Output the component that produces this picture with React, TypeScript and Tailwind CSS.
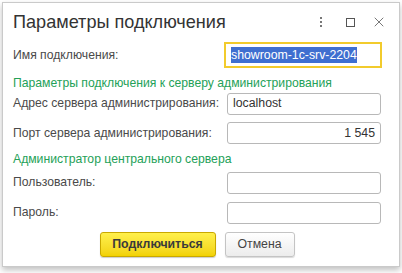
import { X } from "lucide-react";

function Field({ value, right }: { value?: string; right?: boolean }) {
  return (
    <div
      className={`ml-[3px] flex h-[22px] w-[154px] items-center rounded-[3px] border border-[#b8b8b8] bg-white px-[5px] text-[12.3px] text-[#333] ${
        right ? "justify-end" : ""
      }`}
    >
      {value}
    </div>
  );
}

function Row({ label, height, children }: { label: string; height: string; children: React.ReactNode }) {
  return (
    <div className={`flex items-center ${height}`}>
      <div className="w-[211px] whitespace-nowrap text-[12.2px] text-[#4a4a4a]">{label}</div>
      {children}
    </div>
  );
}

export default function App() {
  return (
    <div
      className="h-[273px] w-[402px] bg-white pl-[2px] pt-[2px]"
      style={{ fontFamily: '"Liberation Sans", Arial, sans-serif' }}
    >
      <div className="flex h-[265px] w-[398px] flex-col border border-[#cacaca] bg-white pl-[10px] shadow-[0_3px_6px_rgba(0,0,0,0.25)]">
        {/* Title bar */}
        <div className="flex h-[38px] items-center">
          <div className="pt-[2px] text-[18.1px] text-[#333]">Параметры подключения</div>
          <div className="ml-auto flex items-center pr-[12px] text-[#555]">
            <div className="flex flex-col gap-[2px]">
              <span className="h-[2px] w-[2px] bg-[#777]" />
              <span className="h-[2px] w-[2px] bg-[#777]" />
              <span className="h-[2px] w-[2px] bg-[#777]" />
            </div>
            <div className="ml-[24px] h-[9px] w-[9px] border border-[#555]" />
            <X className="ml-[16px] h-[16px] w-[16px]" strokeWidth={1.2} />
          </div>
        </div>

        <Row label="Имя подключения:" height="h-[28px]">
          <div className="flex h-[26px] w-[158px] items-center border-2 border-[#f2cb2c] pl-[5px] text-[12.3px]">
            <span className="bg-[#3f6fd0] leading-[16px] text-white">showroom-1c-srv-2204</span>
          </div>
        </Row>

        <div className="whitespace-nowrap pt-[7px] text-[12.2px] leading-[15px] text-[#24a158]">
          Параметры подключения к серверу администрирования
        </div>

        <Row label="Адрес сервера администрирования:" height="h-[25px]">
          <Field value="localhost" />
        </Row>
        <Row label="Порт сервера администрирования:" height="h-[34px]">
          <Field value="1 545" right />
        </Row>

        <div className="whitespace-nowrap pt-[2px] text-[12.2px] leading-[15px] text-[#24a158]">
          Администратор центрального сервера
        </div>

        <Row label="Пользователь:" height="h-[31px]">
          <Field />
        </Row>
        <Row label="Пароль:" height="h-[29px]">
          <Field />
        </Row>

        <div className="mt-[5px] flex justify-center gap-[9px] pr-[18px]">
          <button className="flex h-[25px] w-[116px] items-center justify-center rounded-[3px] border border-[#c9a800] bg-gradient-to-b from-[#fff04a] to-[#f2d200] text-[12.3px] font-bold text-[#3a3a3a] shadow-[0_1px_1px_rgba(0,0,0,0.2)]">
            Подключиться
          </button>
          <button className="flex h-[25px] w-[70px] items-center justify-center rounded-[3px] border border-[#c4c4c4] bg-gradient-to-b from-white to-[#ececec] text-[12.3px] text-[#444] shadow-[0_1px_1px_rgba(0,0,0,0.15)]">
            Отмена
          </button>
        </div>
      </div>
    </div>
  );
}
